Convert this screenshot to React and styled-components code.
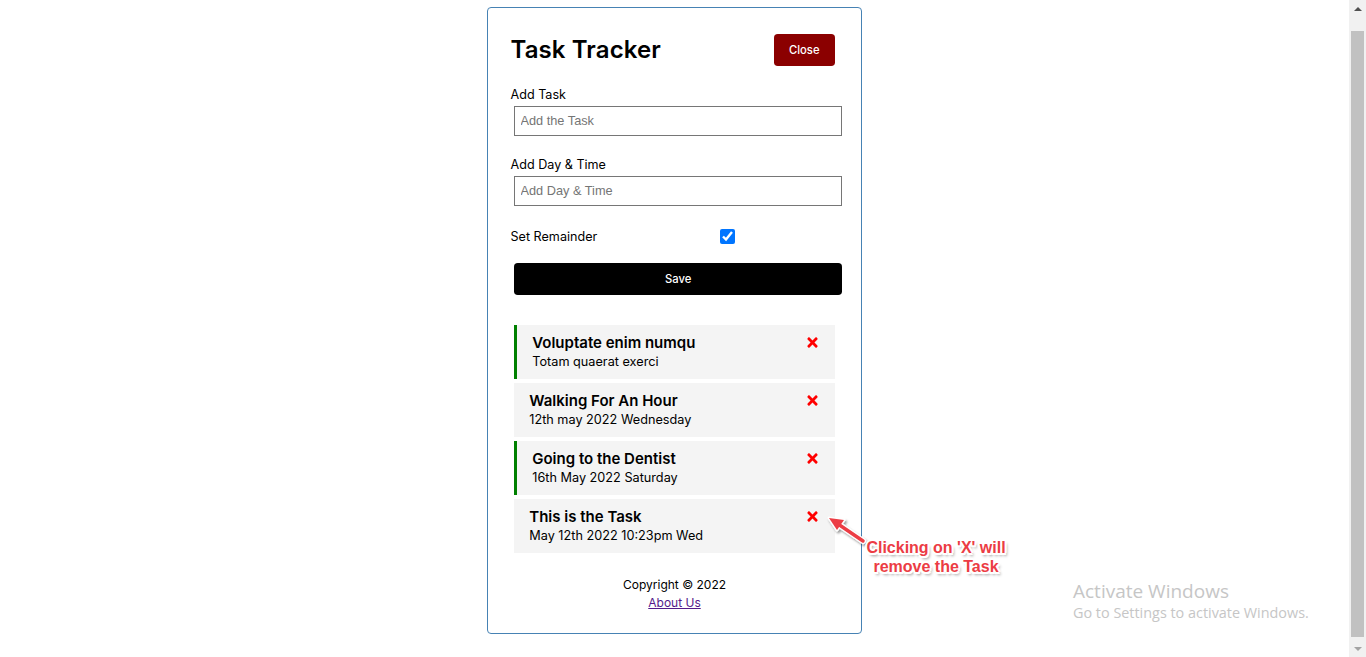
import React from "react";
import styled, { createGlobalStyle } from "styled-components";
import { FaTimes } from "react-icons/fa";

const GlobalStyle = createGlobalStyle`
  * { box-sizing: border-box; }
  html, body { margin: 0; padding: 0; height: 100%; overflow: hidden; background: #fff; }
  body { font-family: Inter, "Noto Sans", sans-serif; color: #000; }
`;

const Screen = styled.div`
  display: flex;
  height: 100vh;
`;

const Page = styled.main`
  flex: 1;
  position: relative;
  padding-top: 7px;
  overflow: hidden;
`;

const Container = styled.div`
  width: 375px;
  margin: 0 auto;
  border: 1px solid steelblue;
  border-radius: 4px;
  padding: 26px 22.5px 21px;
`;

const Header = styled.header`
  display: flex;
  justify-content: space-between;
  align-items: center;
  height: 32px;
`;

const Title = styled.h1`
  margin: 0;
  font-size: 24px;
  font-weight: 600;
  line-height: 32px;
  letter-spacing: 0.1px;
`;

const Button = styled.button`
  display: ${({ $block }) => ($block ? "block" : "inline-block")};
  width: ${({ $block }) => ($block ? "100%" : "auto")};
  height: 32px;
  margin: ${({ $block }) => ($block ? "15px 3.75px 0" : "0 4px 0 0")};
  padding: 0 15px;
  border: none;
  border-radius: 3.75px;
  background: ${({ $bg }) => $bg || "#000"};
  color: #fff;
  font-family: inherit;
  font-size: 11.25px;
  font-weight: 500;
  cursor: pointer;
`;

const Form = styled.form`
  margin-top: 20px;
  margin-bottom: 30px;
`;

const FormControl = styled.div`
  margin-bottom: 20.75px;
`;

const Label = styled.label`
  display: block;
  font-size: 12.6px;
  line-height: 18px;
`;

const Input = styled.input`
  display: block;
  width: 100%;
  height: 30px;
  margin: 1.5px 3.75px 0;
  padding: 2px 5.25px;
  border: 1px solid #767676;
  border-radius: 0;
  font-family: "Liberation Sans", Arial, sans-serif;
  font-size: 12.75px;
  outline: none;

  &::placeholder { color: #757575; }
`;

const CheckRow = styled.div`
  display: flex;
  align-items: center;
  justify-content: space-between;
  height: 21px;

  ${Label} { flex: 1; }
`;

const CheckCell = styled.div`
  flex: 2;
  display: flex;
  justify-content: center;
`;

const Check = styled.input`
  width: 15px;
  height: 15px;
  margin: 2px 3px 4px 0;
  accent-color: #0075ff;
`;

const TaskList = styled.div`
  display: flex;
  flex-direction: column;
  gap: 4px;
`;

const Task = styled.div`
  margin: 0 3.75px;
  padding: 7.5px 15px;
  background: #f4f4f4;
  border-left: ${({ $reminder }) => ($reminder ? "3.75px solid green" : "none")};
  cursor: pointer;
`;

const TaskTitle = styled.h3`
  display: flex;
  justify-content: space-between;
  align-items: center;
  margin: 0;
  font-size: 15px;
  font-weight: 600;
  line-height: 21px;

  svg { color: red; flex-shrink: 0; }
`;

const TaskDay = styled.p`
  margin: 0;
  font-size: 12.7px;
  line-height: 18px;
`;

const Footer = styled.footer`
  margin-top: 23px;
  text-align: center;
  font-size: 12px;
  line-height: 18px;

  p { margin: 0; }
  a { color: #551a8b; }
`;

const Note = styled.div`
  position: absolute;
  left: 856px;
  top: 538px;
  width: 160px;
  text-align: center;
  font-family: "Liberation Sans", Arial, sans-serif;
  font-size: 16px;
  font-weight: 700;
  line-height: 19px;
  color: #ec3c44;
  text-shadow:
    2px 0 0 #fff, -2px 0 0 #fff, 0 2px 0 #fff, 0 -2px 0 #fff,
    1.5px 1.5px 0 #fff, -1.5px -1.5px 0 #fff, 1.5px -1.5px 0 #fff, -1.5px 1.5px 0 #fff,
    2px 3px 3px rgba(0, 0, 0, 0.45);
`;

const Arrow = styled.svg`
  position: absolute;
  left: 820px;
  top: 508px;
  overflow: visible;
`;

const Watermark = styled.div`
  position: absolute;
  left: 1073px;
  top: 579px;
  font-family: "Open Sans", "Noto Sans", sans-serif;
  color: #c6c6c6;

  div:first-child { font-size: 19px; line-height: 24px; }
  div:last-child { font-size: 14.4px; line-height: 20px; }
`;

const Scrollbar = styled.div`
  width: 17px;
  display: flex;
  flex-direction: column;
  background: #f1f1f1;
`;

const ScrollButton = styled.div`
  height: 17px;
  display: flex;
  align-items: center;
  justify-content: center;

  &::after {
    content: "";
    border-left: 4px solid transparent;
    border-right: 4px solid transparent;
    ${({ $down }) =>
      $down ? "border-top: 4px solid #a3a3a3;" : "border-bottom: 4px solid #505050;"}
  }
`;

const Track = styled.div`
  flex: 1;
  display: flex;
  padding: 14px 2px 3px;
`;

const Thumb = styled.div`
  flex: 1;
  background: #c1c1c1;
`;

const tasks = [
  { id: 1, text: "Voluptate enim numqu", day: "Totam quaerat exerci", reminder: true },
  { id: 2, text: "Walking For An Hour", day: "12th may 2022 Wednesday", reminder: false },
  { id: 3, text: "Going to the Dentist", day: "16th May 2022 Saturday", reminder: true },
  { id: 4, text: "This is the Task", day: "May 12th 2022 10:23pm Wed", reminder: false },
];

const App = () => {
  return (
    <>
      <GlobalStyle />
      <Screen>
        <Page>
          <Container>
            <Header>
              <Title>Task Tracker</Title>
              <Button type="button" $bg="#8b0000">Close</Button>
            </Header>

            <Form onSubmit={(e) => e.preventDefault()}>
              <FormControl>
                <Label>Add Task</Label>
                <Input type="text" placeholder="Add the Task" />
              </FormControl>
              <FormControl>
                <Label>Add Day &amp; Time</Label>
                <Input type="text" placeholder="Add Day & Time" />
              </FormControl>
              <CheckRow>
                <Label>Set Remainder</Label>
                <CheckCell>
                  <Check type="checkbox" defaultChecked />
                </CheckCell>
              </CheckRow>
              <Button type="submit" $block>Save</Button>
            </Form>

            <TaskList>
              {tasks.map((task) => (
                <Task key={task.id} $reminder={task.reminder}>
                  <TaskTitle>
                    {task.text}
                    <FaTimes size={15} />
                  </TaskTitle>
                  <TaskDay>{task.day}</TaskDay>
                </Task>
              ))}
            </TaskList>

            <Footer>
              <p>Copyright &copy; 2022</p>
              <a href="#about">About Us</a>
            </Footer>
          </Container>

          <Arrow width="50" height="40" viewBox="0 0 50 40">
            <defs>
              <filter id="shadow" x="-30%" y="-30%" width="160%" height="160%">
                <feDropShadow dx="1.5" dy="2" stdDeviation="1.2" floodColor="#000" floodOpacity="0.4" />
              </filter>
            </defs>
            <g filter="url(#shadow)">
              <line x1="18" y1="16" x2="43" y2="33" stroke="#fff" strokeWidth="6" strokeLinecap="round" />
              <polygon points="9,10 24,12 17,22" fill="#fff" stroke="#fff" strokeWidth="3" strokeLinejoin="round" />
              <line x1="18" y1="16" x2="43" y2="33" stroke="#ec3c44" strokeWidth="3.5" strokeLinecap="round" />
              <polygon points="9,10 24,12 17,22" fill="#ec3c44" />
            </g>
          </Arrow>
          <Note>
            Clicking on 'X' will
            <br />
            remove the Task
          </Note>

          <Watermark>
            <div>Activate Windows</div>
            <div>Go to Settings to activate Windows.</div>
          </Watermark>
        </Page>

        <Scrollbar>
          <ScrollButton />
          <Track>
            <Thumb />
          </Track>
          <ScrollButton $down />
        </Scrollbar>
      </Screen>
    </>
  );
};

export default App;
